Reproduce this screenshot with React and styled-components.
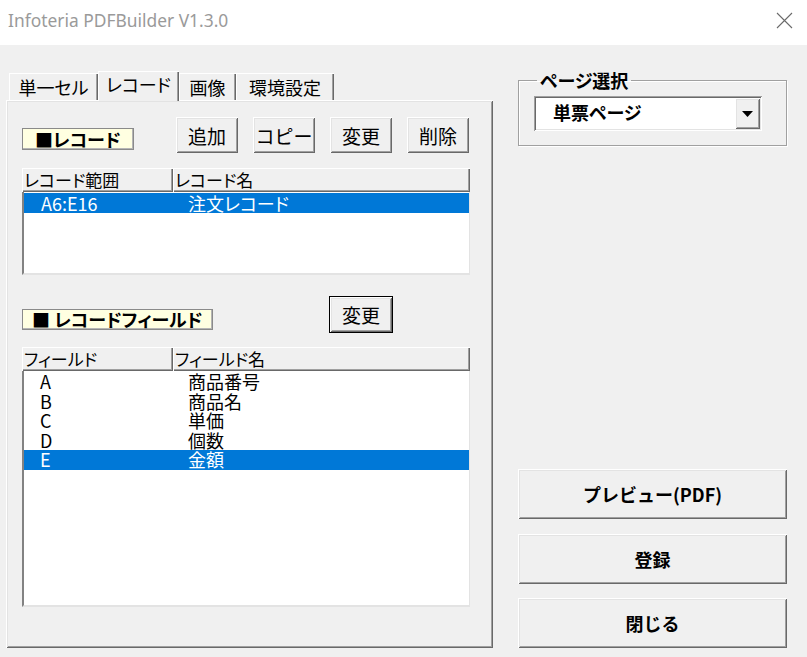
import styled, { createGlobalStyle } from 'styled-components';

const GlobalStyle = createGlobalStyle`
  html, body {
    margin: 0;
    padding: 0;
    background: #f0f0f0;
  }
  body {
    width: 807px;
    height: 657px;
    overflow: hidden;
    font-family: "Noto Sans CJK JP", "Noto Sans", sans-serif;
    font-feature-settings: "palt";
    color: #000;
  }
  * { box-sizing: border-box; }
`;

const raised = `
  box-shadow: inset 1px 1px #fff, inset -1px -1px #696969, inset 2px 2px #e3e3e3, inset -2px -2px #a0a0a0;
`;

const Window = styled.div`
  width: 807px;
  height: 657px;
  display: flex;
  flex-direction: column;
  background: #f0f0f0;
`;

const TitleBar = styled.div`
  height: 45px;
  flex: none;
  background: #fff;
  display: flex;
  align-items: center;
  justify-content: space-between;
  padding: 0 14px 5px 8px;
`;

const Title = styled.span`
  font-family: "Noto Sans", "Open Sans", sans-serif;
  font-size: 17.4px;
  color: #9a9a9a;
`;

const Body = styled.div`
  flex: 1;
  display: flex;
  gap: 25px;
  padding: 26px 20px 9px 6px;
`;

const LeftColumn = styled.div`
  width: 487px;
  display: flex;
  flex-direction: column;
`;

const TabStrip = styled.div`
  height: 29px;
  flex: none;
  display: flex;
  align-items: flex-end;
  padding-left: 3px;
`;

const Tab = styled.div`
  width: ${p => p.$w}px;
  height: ${p => (p.$active ? 30 : 27)}px;
  margin-bottom: ${p => (p.$active ? -1 : 0)}px;
  position: relative;
  z-index: ${p => (p.$active ? 1 : 0)};
  background: #f0f0f0;
  box-shadow: inset 1px 1px #fff, inset -1px 0 #696969, inset -2px 0 #a0a0a0;
  font-size: 18px;
  line-height: ${p => (p.$active ? 27 : 29)}px;
  text-align: center;
  white-space: nowrap;
`;

const Panel = styled.div`
  flex: 1;
  display: flex;
  flex-direction: column;
  padding: 17px 23px 0 16px;
  ${raised}
`;

const Toolbar = styled.div`
  display: grid;
  grid-template-columns: ${p => p.$cols};
  column-gap: 15px;
  align-items: end;
  margin-top: ${p => p.$top || 0}px;
`;

const TagLabel = styled.div`
  justify-self: start;
  height: ${p => p.$h}px;
  margin-bottom: 3px;
  padding: 0 ${p => p.$px}px;
  background: #ffffe1;
  border: 1px solid #8a8a8a;
  box-shadow: inset -1px -1px #b5b5b5;
  font-size: 18px;
  font-weight: 700;
  line-height: ${p => p.$h - 2}px;
  white-space: nowrap;
`;

const SmallButton = styled.button`
  width: ${p => p.$w || 62}px;
  height: ${p => (p.$default ? 37 : 36)}px;
  padding: 0;
  border: ${p => (p.$default ? '1px solid #000' : 'none')};
  background: #f0f0f0;
  font-family: inherit;
  font-size: 19px;
  color: #000;
  ${raised}
`;

const ListView = styled.div`
  margin-top: ${p => p.$top}px;
  display: flex;
  flex-direction: column;
`;

const HeaderRow = styled.div`
  display: grid;
  grid-template-columns: 151px 1fr;
  height: 24px;
`;

const HeaderCell = styled.div`
  padding-left: 2px;
  background: #f0f0f0;
  box-shadow: inset 1px 1px #fff, inset -1px -1px #696969, inset -2px -2px #a0a0a0;
  font-size: 17px;
  line-height: 23px;
  white-space: nowrap;
`;

const ListBody = styled.div`
  height: ${p => p.$h}px;
  padding-top: 1px;
  background: #fff;
  border-left: 2px solid #828282;
  border-right: 1px solid #e3e3e3;
  border-bottom: 2px solid #e3e3e3;
`;

const Row = styled.div`
  display: grid;
  grid-template-columns: 149px 1fr;
  height: ${p => p.$rh}px;
  background: ${p => (p.$selected ? '#0078d7' : 'transparent')};
  color: ${p => (p.$selected ? '#fff' : '#000')};
  font-size: 18px;
  line-height: ${p => p.$rh}px;
`;

const Cell = styled.div`
  padding-left: ${p => p.$pad}px;
  white-space: nowrap;
`;

const RightColumn = styled.div`
  width: 269px;
  display: flex;
  flex-direction: column;
`;

const GroupBox = styled.fieldset`
  margin: 0;
  padding: 7px 24px 14px 15px;
  border: 1px solid #a0a0a0;
  box-shadow: inset 1px 1px #fff, 1px 1px #fff;
  min-width: 0;
`;

const Legend = styled.legend`
  margin-left: 3px;
  padding: 0 3px;
  font-size: 18px;
  font-weight: 700;
  line-height: 18px;
`;

const Combo = styled.div`
  height: 35px;
  display: flex;
  align-items: stretch;
  padding: 2px;
  background: #fff;
  box-shadow: inset 1px 1px #a0a0a0, inset -1px -1px #fff, inset 2px 2px #696969, inset -2px -2px #e3e3e3;
`;

const ComboText = styled.div`
  flex: 1;
  padding-left: 17px;
  font-size: 18px;
  font-weight: 700;
  line-height: 28px;
`;

const ComboArrow = styled.div`
  width: 25px;
  display: flex;
  align-items: center;
  justify-content: center;
  background: #f0f0f0;
  ${raised}
`;

const ActionStack = styled.div`
  margin-top: auto;
  display: flex;
  flex-direction: column;
  gap: 14.5px;
`;

const ActionButton = styled.button`
  height: 50px;
  width: 100%;
  padding: 0;
  border: none;
  background: #f0f0f0;
  font-family: inherit;
  font-size: 18px;
  font-weight: 700;
  color: #000;
  ${raised}
`;

const tabs = [
  { label: '単一セル', w: 89 },
  { label: 'レコード', w: 81, active: true },
  { label: '画像', w: 57 },
  { label: '環境設定', w: 98 },
];

const records = [{ range: 'A6:E16', name: '注文レコード', selected: true }];

const fields = [
  { f: 'A', name: '商品番号' },
  { f: 'B', name: '商品名' },
  { f: 'C', name: '単価' },
  { f: 'D', name: '個数' },
  { f: 'E', name: '金額', selected: true },
];

export default function App() {
  return (
    <Window>
      <GlobalStyle />
      <TitleBar>
        <Title>Infoteria PDFBuilder V1.3.0</Title>
        <svg width="17" height="17" viewBox="0 0 17 17">
          <path d="M1 1 L16 16 M16 1 L1 16" stroke="#6a6a6a" strokeWidth="1.1" fill="none" />
        </svg>
      </TitleBar>
      <Body>
        <LeftColumn>
          <TabStrip>
            {tabs.map(t => (
              <Tab key={t.label} $w={t.w} $active={t.active}>{t.label}</Tab>
            ))}
          </TabStrip>
          <Panel>
            <Toolbar $cols="139px repeat(4, 62px)">
              <TagLabel $h={22} $px={12}>■レコード</TagLabel>
              <SmallButton>追加</SmallButton>
              <SmallButton>コピー</SmallButton>
              <SmallButton>変更</SmallButton>
              <SmallButton>削除</SmallButton>
            </Toolbar>
            <ListView $top={15}>
              <HeaderRow>
                <HeaderCell>レコード範囲</HeaderCell>
                <HeaderCell>レコード名</HeaderCell>
              </HeaderRow>
              <ListBody $h={83}>
                {records.map(r => (
                  <Row key={r.range} $rh={20} $selected={r.selected}>
                    <Cell $pad={17}>{r.range}</Cell>
                    <Cell $pad={15}>{r.name}</Cell>
                  </Row>
                ))}
              </ListBody>
            </ListView>
            <Toolbar $cols="292px 64px" $top={21}>
              <TagLabel $h={21} $px={9}>■ レコードフィールド</TagLabel>
              <SmallButton $default $w={64}>変更</SmallButton>
            </Toolbar>
            <ListView $top={14}>
              <HeaderRow>
                <HeaderCell>フィールド</HeaderCell>
                <HeaderCell>フィールド名</HeaderCell>
              </HeaderRow>
              <ListBody $h={236}>
                {fields.map(r => (
                  <Row key={r.f} $rh={19.5} $selected={r.selected}>
                    <Cell $pad={16}>{r.f}</Cell>
                    <Cell $pad={15}>{r.name}</Cell>
                  </Row>
                ))}
              </ListBody>
            </ListView>
          </Panel>
        </LeftColumn>
        <RightColumn>
          <GroupBox>
            <Legend>ページ選択</Legend>
            <Combo>
              <ComboText>単票ページ</ComboText>
              <ComboArrow>
                <svg width="11" height="6" viewBox="0 0 11 6">
                  <path d="M0 0 H11 L5.5 6 Z" fill="#000" />
                </svg>
              </ComboArrow>
            </Combo>
          </GroupBox>
          <ActionStack>
            <ActionButton>プレビュー(PDF)</ActionButton>
            <ActionButton>登録</ActionButton>
            <ActionButton>閉じる</ActionButton>
          </ActionStack>
        </RightColumn>
      </Body>
    </Window>
  );
}
